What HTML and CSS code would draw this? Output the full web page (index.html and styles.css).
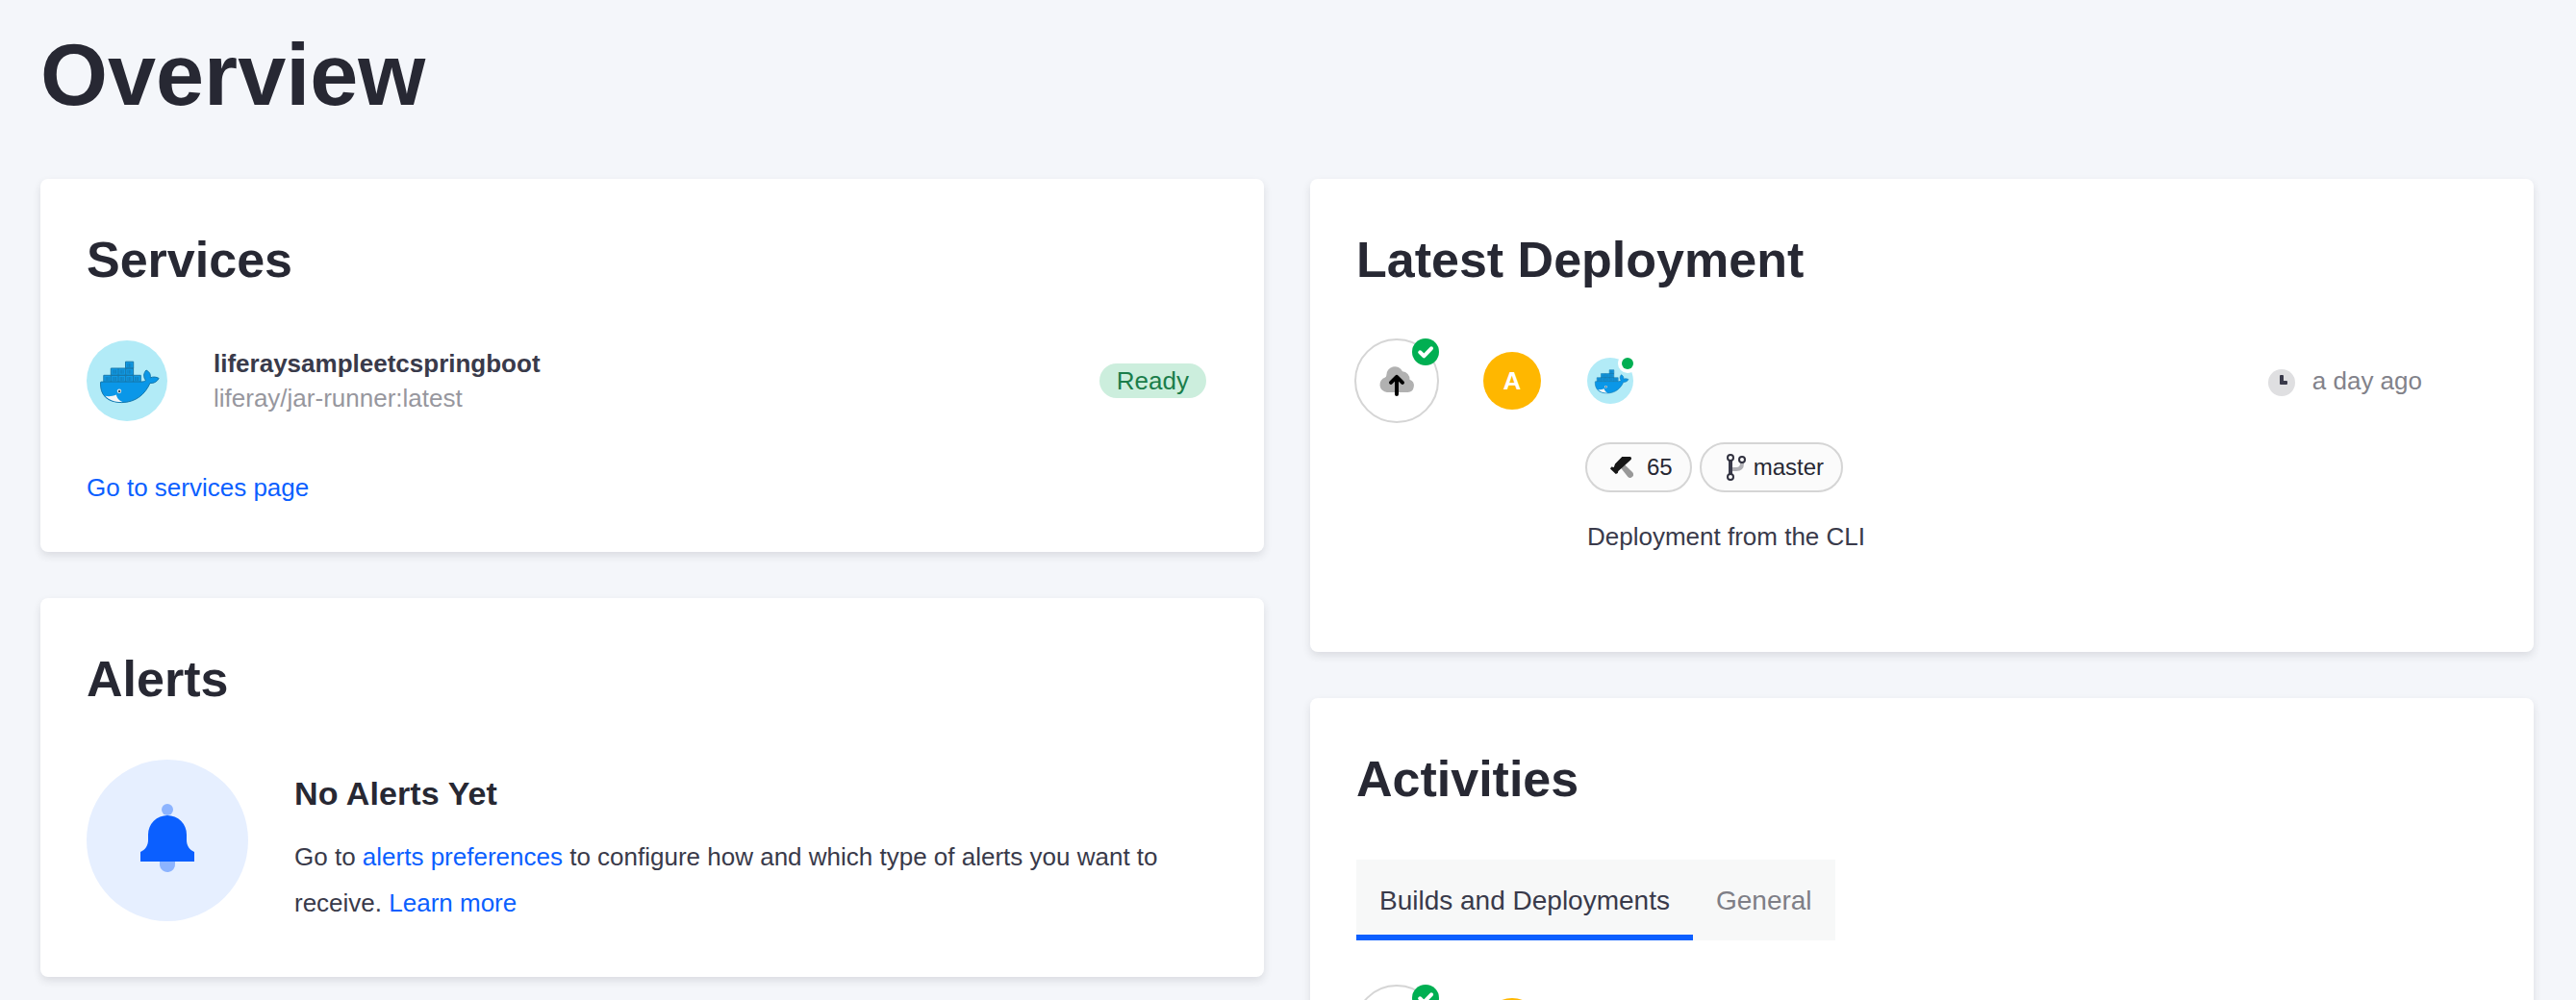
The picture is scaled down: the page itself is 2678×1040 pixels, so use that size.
FILE: index.html
```html
<!DOCTYPE html>
<html lang="en">
<head>
<meta charset="utf-8">
<title>Overview</title>
<link rel="stylesheet" href="styles.css">
</head>
<body>
<svg class="sprite" aria-hidden="true">
  <symbol id="docker" viewBox="0 0 84 84">
    <circle cx="42" cy="42" r="42" fill="#b2ebf7"/>
    <path d="M17.800 36.300h38.500v7H17.800zM25.300 29h23.300v7.300H25.300zM40.500 22.200h8.200V29h-8.200z" fill="#109ae6" stroke="#1878ab" stroke-width="1"/>
    <path d="M25.300 36v7M33 29v14M40.700 29v14M48.500 36v7" stroke="#1878ab" stroke-width="1"/>
    <path d="M20.200 38v4m1.500-4v4m1.500-4v4m4.500-4v4m1.500-4v4m1.500-4v4m4.500-4v4m1.500-4v4m1.500-4v4m4.700-4v4m1.500-4v4m1.500-4v4m4.700-4v4m1.500-4v4m1.500-4v4M27.700 30.700v4m1.500-4v4m1.500-4v4m4.500-4v4m1.500-4v4m1.500-4v4m4.700-4v4m1.500-4v4m1.500-4v4m-3-10.800v4m1.500-4v4m1.500-4v4" stroke="#1676ab" stroke-width=".7" fill="none"/>
    <path d="M14.500 44c0-.6.300-.9.800-.9H57c2-.1 3.300-.5 4.600-1.400-2.800-3.600-2.400-7.700.4-10.700 3.700 1.800 4.800 4.600 4.300 7.800 3.100-1.200 6-.9 8.800.6-1.700 3.700-5 5.300-9.200 5.100C61 56 51 64.600 36.500 64.600 21.500 64.600 14 57 14.500 44z" fill="#0a97e8" stroke="#1477ac" stroke-width="1"/>
    <path d="M19.500 57.800c3.500.9 7.500.3 11.500-1.300.2 3 3 6.500 6.500 7.600-8 .2-14.200-2-18-6.300z" fill="#f3f5f6"/>
    <circle cx="34" cy="52.800" r="2.200" fill="#e4e8ea"/>
    <circle cx="34.100" cy="52.900" r="1.200" fill="#3b5563"/>
  </symbol>
  <symbol id="deploy" viewBox="0 0 88 88">
    <circle cx="44" cy="44" r="43" fill="#fff" stroke="#d5d5d5" stroke-width="2"/>
    <path d="M34 56a8 8 0 0 1-2-15.600 3 3 0 0 0 1.300-2A8.800 8.800 0 0 1 50 34.200a8 8 0 0 1 7.500 8.500A6.900 6.900 0 0 1 55.500 56z" fill="#b1b1b1"/>
    <path d="M44 58V40m-6 5.800 6-6 6 6" fill="none" stroke="#000" stroke-width="4" stroke-linecap="round" stroke-linejoin="round"/>
    <circle cx="74" cy="14" r="14" fill="#00af52"/>
    <path d="M68.200 14.300l4.100 4 7.700-8" fill="none" stroke="#fff" stroke-width="4" stroke-linecap="round" stroke-linejoin="round"/>
  </symbol>
</svg>

<main class="page">
  <h1 class="page-title">Overview</h1>
  <div class="columns">
    <div class="column">
      <section class="card services">
        <h2 class="card-title">Services</h2>
        <div class="service">
          <svg class="service-logo"><use href="#docker"/></svg>
          <div class="service-info">
            <div class="service-name">liferaysampleetcspringboot</div>
            <div class="service-image">liferay/jar-runner:latest</div>
          </div>
          <span class="status">Ready</span>
        </div>
        <a class="link services-link">Go to services page</a>
      </section>

      <section class="card alerts">
        <h2 class="card-title">Alerts</h2>
        <div class="alert">
          <svg class="bell" viewBox="0 0 168 168">
            <circle cx="84" cy="84" r="84" fill="#e6efff"/>
            <circle cx="84" cy="52" r="6" fill="#8db4ff"/>
            <path d="M76 104h16v4a8 8 0 0 1-16 2z" fill="#8db4ff"/>
            <path d="M64 78a20 20 0 0 1 40 0v6c0 5 3 10 8 12v10H56V96c5-2 8-7 8-12z" fill="#0b5fff"/>
          </svg>
          <div class="alert-body">
            <h3 class="alert-title">No Alerts Yet</h3>
            <p class="alert-text">Go to <a class="link">alerts preferences</a> to configure how and which type of alerts you want to receive. <a class="link">Learn more</a></p>
          </div>
        </div>
      </section>
    </div>

    <div class="column">
      <section class="card latest">
        <h2 class="card-title">Latest Deployment</h2>
        <div class="deployment">
          <svg class="deploy-icon"><use href="#deploy"/></svg>
          <span class="avatar">A</span>
          <svg class="deploy-service" viewBox="0 0 48 48">
            <use href="#docker" width="48" height="48"/>
            <circle cx="42" cy="6" r="10" fill="#fff"/>
            <circle cx="42" cy="6" r="6" fill="#00af52"/>
          </svg>
          <div class="time">
            <svg class="clock" viewBox="0 0 28 28">
              <circle cx="14" cy="14" r="14" fill="#dfdfe1"/>
              <path d="M13 6h2q1 0 1 1v5h3q1 0 1 1v2q0 1-1 1h-6q-1 0-1-1V7q0-1 1-1z" fill="#393a4a"/>
            </svg>
            <span>a day ago</span>
          </div>
        </div>
        <div class="details">
          <div class="tags">
            <span class="tag">
              <svg class="hammer" viewBox="0 0 24 24">
                <path d="M10.500 12l4-3.200 8.500 8.200a3.300 3.300 0 0 1-4.800 4.800z" fill="#999"/>
                <path d="M12.300 1H20.500q1.500 0 1.500 1.500c0 1-.4 1.500-1.200 2.200L8.300 16l-.5 2-2 1L0 13.500 1.200 11.500 3.800 12 5 8.500z" fill="#161616"/>
              </svg>
              65
            </span>
            <span class="tag">
              <svg class="branch" viewBox="0 0 20 28">
                <path d="M16 7v3q0 6-6 6H5" fill="none" stroke="#b0b0b5" stroke-width="4"/>
                <path d="M4 5v18" stroke="#393a4a" stroke-width="4"/>
                <g fill="#fbfbfb" stroke="#30313f" stroke-width="2"><circle cx="4" cy="4" r="3"/><circle cx="4" cy="24" r="3"/><circle cx="16" cy="6" r="3"/></g>
              </svg>
              master
            </span>
          </div>
          <p class="message">Deployment from the CLI</p>
        </div>
      </section>

      <section class="card activities">
        <h2 class="card-title">Activities</h2>
        <div class="tabs">
          <span class="tab tab-active">Builds and Deployments</span>
          <span class="tab">General</span>
        </div>
        <div class="deployment">
          <svg class="deploy-icon"><use href="#deploy"/></svg>
          <span class="avatar"></span>
        </div>
      </section>
    </div>
  </div>
</main>
</body>
</html>
```
FILE: styles.css
```css
* { box-sizing: border-box; }

body {
  margin: 0;
  background: #f4f6fa;
  color: #393a4a;
  font: 26px/36px "Liberation Sans", Arial, sans-serif;
}

h1, h2, h3, p { margin: 0; }
svg { display: block; flex: none; }
.sprite { display: none; }

.page {
  height: 1040px;
  overflow: hidden;
  padding: 28px 44px 0 42px;
}

.page-title {
  margin-bottom: 58px;
  color: #272833;
  font-size: 90px;
  line-height: 100px;
}

.columns {
  display: grid;
  grid-template-columns: 1fr 1fr;
  gap: 48px;
  align-items: start;
}

.column {
  display: flex;
  flex-direction: column;
  gap: 48px;
}

.card {
  padding: 48px;
  border-radius: 8px;
  background: #fff;
  box-shadow: 0 4px 8px rgba(39, 40, 51, .12);
}

.services { height: 388px; }
.alerts { height: 394px; }
.latest { height: 492px; }
.activities { height: 700px; }

.card-title {
  margin-bottom: 48px;
  color: #272833;
  font-size: 52px;
  line-height: 72px;
}

.link { color: #0b5fff; }

.service {
  display: flex;
  align-items: center;
  gap: 48px;
  padding-right: 12px;
}

.service-logo { width: 84px; height: 84px; }
.service-info { flex: 1; }
.service-name { font-weight: bold; }
.service-image { color: #97979e; }

.status {
  padding: 0 18px;
  border-radius: 18px;
  background: #cceedd;
  color: #1a7d4a;
}

.services-link { display: block; margin-top: 51px; }

.alert { display: flex; gap: 48px; }
.bell { width: 168px; height: 168px; }
.alert-body { padding-top: 11px; }

.alert-title {
  margin-bottom: 18px;
  color: #272833;
  font-size: 34px;
  line-height: 48px;
  letter-spacing: .1px;
}

.alert-text { line-height: 48px; }

.deployment {
  display: flex;
  align-items: center;
  gap: 48px;
  height: 84px;
}

.deploy-icon { width: 88px; height: 88px; margin: -2px; }

.avatar {
  width: 60px;
  height: 60px;
  border-radius: 50%;
  background: #ffb700;
  color: #fff;
  font-weight: bold;
  line-height: 61px;
  text-align: center;
}

.deploy-service { width: 48px; height: 48px; }

.time {
  display: flex;
  gap: 18px;
  margin: 0 68px 0 auto;
  color: #82828a;
}

.clock { width: 28px; height: 28px; margin-top: 6px; }

.details { padding: 22px 0 0 238px; }
.tags { display: flex; gap: 8px; }

.tag {
  display: flex;
  align-items: center;
  height: 52px;
  padding: 0 18px 0 24px;
  border: 2px solid #d5d5d5;
  border-radius: 26px;
  background: #fbfbfb;
  color: #272833;
  font-size: 24px;
}

.hammer { width: 24px; height: 24px; margin-right: 14px; }
.branch { width: 20px; height: 28px; margin: 0 8px 0 2px; }
.message { margin: 28px 0 0 2px; }

.tabs {
  display: flex;
  width: max-content;
  margin-bottom: 48px;
  background: #f7f8f8;
}

.tab {
  height: 84px;
  padding: 22px 24px 0;
  color: #7e7e86;
  font-size: 28px;
  line-height: 41px;
}

.tab-active {
  border-bottom: 6px solid #0b5fff;
  color: #393a4a;
}
```
